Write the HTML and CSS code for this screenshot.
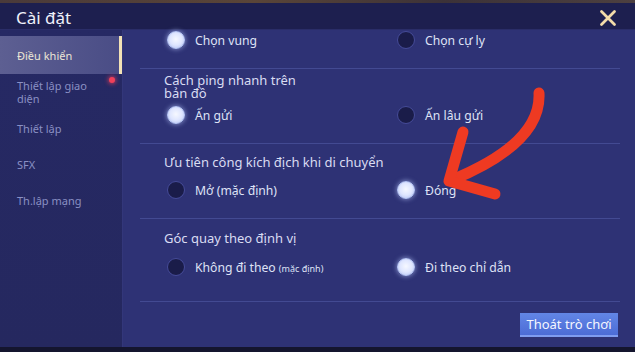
FILE: index.html
```html
<!DOCTYPE html>
<html lang="vi">
<head>
<meta charset="utf-8">
<title>Cài đặt</title>
<link rel="stylesheet" href="styles.css">
</head>
<body>
<div class="screen">
  <div class="topbar"></div>
  <header class="header">
    <h1 class="title">Cài đặt</h1>
    <span class="close" aria-label="Đóng">
      <svg width="18" height="18" viewBox="0 0 18 18"><path d="M2.5 2.5 L15.5 15.5 M15.5 2.5 L2.5 15.5" stroke="#f3dcaa" stroke-width="2.8" stroke-linecap="round" fill="none"/></svg>
    </span>
  </header>
  <div class="main">
    <nav class="sidebar">
      <div class="nav-item active">Điều khiển</div>
      <div class="nav-item">Thiết lập giao diện<span class="dot"></span></div>
      <div class="nav-item">Thiết lập</div>
      <div class="nav-item">SFX</div>
      <div class="nav-item">Th.lập mạng</div>
    </nav>
    <section class="content">
      <div class="group group-first">
        <div class="row">
          <label class="opt"><span class="radio on"></span><span>Chọn vung</span></label>
          <label class="opt"><span class="radio"></span><span>Chọn cự ly</span></label>
        </div>
      </div>
      <div class="divider"></div>
      <div class="group">
        <div class="g-title"><span class="narrow">Cách ping nhanh trên bản đồ</span></div>
        <div class="row">
          <label class="opt"><span class="radio on"></span><span>Ấn gửi</span></label>
          <label class="opt"><span class="radio"></span><span>Ấn lâu gửi</span></label>
        </div>
      </div>
      <div class="divider"></div>
      <div class="group">
        <div class="g-title">Ưu tiên công kích địch khi di chuyển</div>
        <div class="row">
          <label class="opt"><span class="radio"></span><span>Mở (mặc định)</span></label>
          <label class="opt"><span class="radio on"></span><span>Đóng</span></label>
        </div>
      </div>
      <div class="divider"></div>
      <div class="group group-last">
        <div class="g-title">Góc quay theo định vị</div>
        <div class="row">
          <label class="opt"><span class="radio"></span><span>Không đi theo <small class="note">(mặc định)</small></span></label>
          <label class="opt"><span class="radio on"></span><span>Đi theo chỉ dẫn</span></label>
        </div>
      </div>
      <div class="divider"></div>
      <div class="footer">
        <button class="exit">Thoát trò chơi</button>
      </div>
    </section>
  </div>
  <div class="bottombar"></div>
  <svg class="arrow" width="635" height="352" viewBox="0 0 635 352">
    <path d="M539 93 C541 131 503 159 452 180" stroke="#ee3a22" stroke-width="11" stroke-linecap="round" fill="none"/>
    <path d="M463 132 L449 181 L495 194" stroke="#ee3a22" stroke-width="11" stroke-linecap="round" stroke-linejoin="round" fill="none"/>
  </svg>
</div>
</body>
</html>
```

FILE: styles.css
```css
* { box-sizing: border-box; }
html, body { margin: 0; padding: 0; }
body {
  width: 635px;
  height: 352px;
  overflow: hidden;
  font-family: "Noto Sans", "Open Sans", sans-serif;
  background: #161735;
}
.screen {
  position: relative;
  width: 635px;
  height: 352px;
  display: flex;
  flex-direction: column;
}
.topbar {
  height: 3px;
  background: linear-gradient(90deg, #4a3a3a, #5a4538 40%, #3c3238 70%, #4d4040);
}
.header {
  height: 27px;
  background: #1d1f4f;
  display: flex;
  align-items: center;
  justify-content: space-between;
  padding: 0 18px 0 16px;
  border-bottom: 1px solid #2a2d68;
}
.title {
  margin: 0;
  font-size: 17px;
  font-weight: 400;
  color: #eef0fa;
  line-height: 20px;
  position: relative;
  top: 2px;
}
.close { display: flex; position: relative; top: 2px; }
.main {
  height: 317px;
  display: flex;
}
.sidebar {
  width: 123px;
  background: linear-gradient(180deg, #262964, #25285f);
  padding-top: 6px;
  border-right: 1px solid #33377a;
}
.nav-item {
  position: relative;
  height: 36px;
  display: flex;
  align-items: center;
  padding: 0 14px 0 17px;
  font-size: 11px;
  line-height: 13px;
  color: #8a90c4;
}
.nav-item.active {
  height: 38px;
  color: #ece6d6;
  background: linear-gradient(90deg, #5d5f92, #4a4d86);
  border-right: 3px solid #f2e2b6;
}
.dot {
  position: absolute;
  right: 7px;
  top: 3px;
  width: 6px;
  height: 6px;
  border-radius: 50%;
  background: #f0405a;
  box-shadow: 0 0 4px 1px rgba(240, 64, 90, 0.7);
}
.content {
  flex: 1;
  background: #2e3275;
  display: flex;
  flex-direction: column;
}
.group-first { padding-bottom: 17px; }
.group { padding-bottom: 18px; }
.group-last { padding-bottom: 24px; }
.g-title {
  height: 36px;
  display: flex;
  align-items: center;
  padding-left: 41px;
  font-size: 13px;
  line-height: 13px;
  color: #d9dcf2;
}
.group-last .g-title { height: 38px; }
.narrow { max-width: 135px; }
.row {
  height: 20px;
  display: grid;
  grid-template-columns: 230px 1fr;
  padding-left: 44px;
  align-items: center;
}
.opt {
  display: flex;
  align-items: center;
  gap: 10px;
  font-size: 12.2px;
  color: #dfe2f6;
  white-space: nowrap;
}
.note { font-size: 9px; }
.radio {
  width: 18px;
  height: 18px;
  border-radius: 50%;
  background: #1a1c49;
  border: 1.5px solid #454b98;
  flex: none;
}
.radio.on {
  background: radial-gradient(circle at 50% 45%, #f6f8ff 0, #dfe6ff 50%, #aebdf2 100%);
  border: 1px solid #b7c6f6;
  box-shadow: 0 0 4px 1px rgba(190, 205, 255, 0.5);
}
.divider {
  height: 1px;
  margin: 0 15px 0 17px;
  background: #434a92;
}
.footer {
  display: flex;
  justify-content: flex-end;
  padding: 11px 17px 0 0;
}
.exit {
  width: 98px;
  height: 24px;
  border: 0;
  border-bottom: 2px solid #7f9cf0;
  background: linear-gradient(180deg, #6286e6, #4c6cd6);
  color: #f4f6ff;
  font-family: "Noto Sans", "Open Sans", sans-serif;
  font-size: 13px;
  padding: 0;
}
.bottombar {
  height: 5px;
  background: #14152e;
}
.arrow {
  position: absolute;
  left: 0;
  top: 0;
  pointer-events: none;
}
```
